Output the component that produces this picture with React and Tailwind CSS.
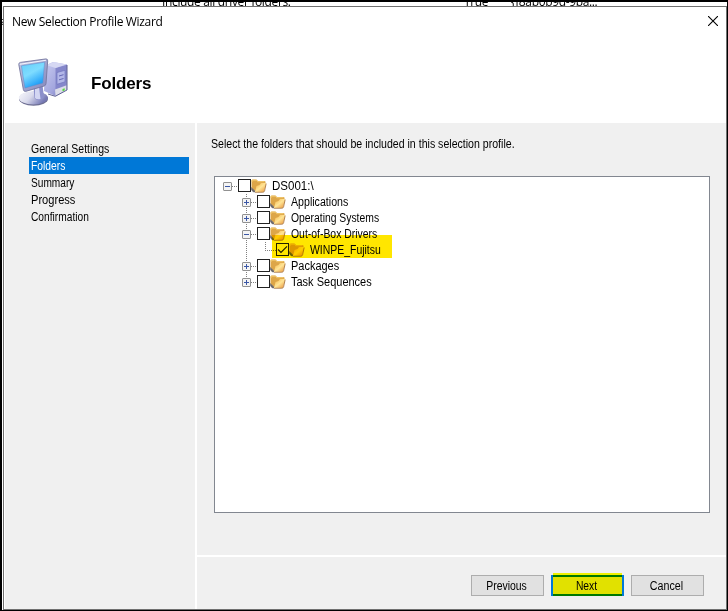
import React from "react";

const steps = [
  { label: "General Settings", width: "scale-x-[0.876]" },
  { label: "Folders", width: "scale-x-[0.86]", active: true },
  { label: "Summary", width: "scale-x-[0.845]" },
  { label: "Progress", width: "scale-x-[0.925]" },
  { label: "Confirmation", width: "scale-x-[0.85]" },
];

const folders = [
  { label: "Applications", toggle: "plus", width: "scale-x-[0.885]" },
  { label: "Operating Systems", toggle: "plus", width: "scale-x-[0.863]" },
  { label: "Out-of-Box Drivers", toggle: "minus", width: "scale-x-[0.868]" },
  { label: "WINPE_Fujitsu", nested: true, checked: true, width: "scale-x-[0.87]" },
  { label: "Packages", toggle: "plus", width: "scale-x-[0.914]" },
  { label: "Task Sequences", toggle: "plus", width: "scale-x-[0.917]" },
];

const ComputerIcon = () => (
  <svg width="52" height="50" viewBox="0 0 52 50">
    <defs>
      <linearGradient id="screen" x1="0" y1="0" x2="0.5" y2="1">
        <stop offset="0" stopColor="#63cdf9" />
        <stop offset="0.5" stopColor="#7edcff" />
        <stop offset="1" stopColor="#1b9cf8" />
      </linearGradient>
      <linearGradient id="frame" x1="0" y1="0" x2="1" y2="1">
        <stop offset="0" stopColor="#c3c5e2" />
        <stop offset="1" stopColor="#8286bc" />
      </linearGradient>
      <linearGradient id="tower" x1="0" y1="0" x2="1" y2="1">
        <stop offset="0" stopColor="#c9ccf0" />
        <stop offset="0.6" stopColor="#a3a6de" />
        <stop offset="1" stopColor="#6a6cb2" />
      </linearGradient>
      <linearGradient id="stand" x1="0" y1="0" x2="1" y2="0.4">
        <stop offset="0" stopColor="#fafafd" />
        <stop offset="0.5" stopColor="#d9daec" />
        <stop offset="1" stopColor="#7578b4" />
      </linearGradient>
    </defs>
    {/* tower */}
    <path d="M27 7.500 35 4l14 2.500-.5 25L37.500 38 26 33Z" fill="url(#tower)" />
    <path d="m37.500 10 11.500-3.200-.5 24.500L37.500 38Z" fill="#8587cb" />
    <path d="m28 7 8-3 12.500 2.600L37.500 10Z" fill="#d6d8f3" />
    <path d="m39 14.500 8-2.200v11.500l-8 2.500Z" fill="#b3b7e8" stroke="#7175bd" strokeWidth="0.7" />
    <path d="m41 18 4.500-1.300M41 21.800l4.500-1.300" stroke="#6568b4" strokeWidth="1" />
    <path d="m37 31.500 11.700-4.200-.2 4.500L37.500 38Z" fill="#dcdde9" />
    <path d="M30 36 37.300 38.300 49 32V7" fill="none" stroke="#5f6193" strokeWidth="1" />
    <path d="m44.500 31 2.200-.8v2.300l-2.200.8Z" fill="#55da3d" />
    {/* round foot and neck */}
    <ellipse cx="15.500" cy="40.800" rx="14.500" ry="7" fill="#6d6e92" />
    <ellipse cx="15.300" cy="39.800" rx="14.500" ry="6.600" fill="url(#stand)" />
    <path d="m15.500 29 9-2 1.500 12c-2 4-8 4-9.500 1Z" fill="#8b8fcb" />
    <path d="m17 30 4-1 1.500 12q-4 1-5.500-1Z" fill="#d3d6f2" />
    {/* monitor */}
    <path
      d="M.8 6.500q-.2-1.800 1.600-2.100L28 .9q1.800 0 1.700 2L28 25.500q-.2 2-1.800 2.500L7.600 33.400q-1.800.3-2.200-1.700Z"
      fill="url(#frame)"
      stroke="#75779f"
      strokeWidth="0.9"
    />
    <path d="M1.800 6.200 28 2.200" stroke="#f3f4fc" strokeWidth="1.100" />
    <path d="m3.400 7.800 23.200-3.600-1.800 20.800L7 30Z" fill="url(#screen)" stroke="#5c8ccc" strokeWidth="0.5" />
  </svg>
);

const FolderIcon = () => (
  <svg className="-ml-px shrink-0" width="17" height="16" viewBox="0 0 17 16">
    <defs>
      <linearGradient id="flap" x1="0" y1="0" x2="1" y2="1">
        <stop offset="0" stopColor="#f5b042" />
        <stop offset="0.5" stopColor="#ffe596" />
        <stop offset="1" stopColor="#e99238" />
      </linearGradient>
    </defs>
    <path d="M1.500 10V2.500l1-1h4L8 3h6.500q1 0 1 1v5L12 13H5Z" fill="#dda648" />
    <path d="M2 4V2.200h4.300L7.700 3.700h6.800" fill="none" stroke="#f2cb70" strokeWidth="1" />
    <path d="M1.200 9 5 12.800v1.500H3.500q-2-1-2.300-3Z" fill="#6e6a6c" />
    <path d="m5 14 1.500-6 3-1L11 5h5l-1.600 7.800q-.3 1.200-1.600 1.200Z" fill="url(#flap)" />
    <path d="M5 14.300h7.800q1.400 0 1.800-1.500L16.200 5.500" fill="none" stroke="#a3703c" strokeWidth="0.8" />
  </svg>
);

const Toggle = ({ type }) => (
  <svg className="shrink-0" width="9" height="9" viewBox="0 0 9 9">
    <rect x="0.500" y="0.500" width="8" height="8" rx="0.500" fill="#f4f4f4" stroke="#919191" />
    <path d="M2 4.500h5" stroke="#3b57a6" />
    {type === "plus" && <path d="M4.500 2v5" stroke="#3b57a6" />}
  </svg>
);

const CheckBox = ({ checked }) => (
  <span className="mb-px flex size-[13px] shrink-0 border border-[#222] bg-white">
    {checked && (
      <svg width="11" height="11" viewBox="0 0 11 11">
        <path d="m1 5.500 3 3 6-6.200" fill="none" stroke="#222" strokeWidth="1.200" />
      </svg>
    )}
  </span>
);

const Dots = () => (
  <span className="h-px w-[6px] shrink-0 bg-[repeating-linear-gradient(90deg,#808080_0_1px,transparent_1px_2px)]" />
);

const FolderRow = ({ folder }) => (
  <div className={`flex h-4 items-center ${folder.nested ? "pl-[50px]" : "pl-[27px]"}`}>
    {folder.nested ? (
      <span className="mb-auto h-[9px] w-[11px] shrink-0 border-b border-l border-dotted border-[#808080]" />
    ) : (
      <>
        <Toggle type={folder.toggle} />
        <Dots />
      </>
    )}
    <CheckBox checked={folder.checked} />
    <FolderIcon />
    <span className={`ml-[5px] origin-left leading-4 whitespace-nowrap ${folder.width}`}>{folder.label}</span>
  </div>
);

const WizardButton = ({ children, primary, width }) => (
  <button
    className={`block h-[21px] w-[73px] bg-[#e1e1e1] pr-[2px] ${
      primary ? "border-2 border-[#0078d7] pt-px leading-[16px]" : "border border-[#adadad] pt-[2px] leading-[17px]"
    }`}
  >
    <span className={`block ${width}`}>{children}</span>
  </button>
);

const App = () => {
  return (
    <div className="relative flex h-[611px] w-[728px] flex-col overflow-hidden border-t-2 border-r border-b border-l-2 border-black bg-white font-['Liberation_Sans',sans-serif] text-[12px] text-black">
      {/* strip of the list behind the dialog */}
      <div className="flex h-1 shrink-0 font-['Open_Sans',sans-serif] leading-3">
        <span className="-mt-[6px] ml-[160px] w-[302px] tracking-[-0.35px] whitespace-nowrap">
          Include all driver folders.
        </span>
        <span className="-mt-[6px] w-[47px] tracking-[-0.4px]">True</span>
        <span className="-mt-[6px] tracking-[-0.35px] whitespace-nowrap">{"{f8ab0b9d-9ba..."}</span>
      </div>
      <span className="absolute top-[13px] -left-[3px] font-['Open_Sans',sans-serif] text-[11px] leading-3">s</span>

      <div className="relative ml-px flex min-h-0 flex-1 flex-col border border-[#707070] bg-white pl-px">
        <header className="h-[116px] shrink-0">
          <div className="flex h-[30px] justify-between pl-[7px] font-['Open_Sans',sans-serif]">
            <span className="leading-[30px] tracking-[-0.34px]">New Selection Profile Wizard</span>
            <svg className="mt-[9px] mr-[8px]" width="10" height="10" viewBox="0 0 10 10">
              <path d="m0 0 10 10M10 0 0 10" stroke="#000" strokeWidth="1.100" />
            </svg>
          </div>
          <div className="flex pt-[21px] pl-[13px]">
            <ComputerIcon />
            <h1 className="mt-[14px] ml-[21px] text-[17px] leading-[24px] font-bold tracking-[-0.15px]">Folders</h1>
          </div>
        </header>

        <div className="flex min-h-0 flex-1">
          <aside className="w-[190px] shrink-0 bg-[#f0f0f0] pt-[17px] pl-6">
            {steps.map((step) => (
              <div
                key={step.label}
                className={`h-[17px] w-[160px] pl-[2px] leading-[18px] ${step.active ? "bg-[#0078d7] text-white" : ""}`}
              >
                <span className={`block origin-left ${step.width}`}>{step.label}</span>
              </div>
            ))}
          </aside>

          <div className="ml-[2px] flex min-w-0 flex-1 flex-col">
            <main className="h-[432px] shrink-0 bg-[#f0f0f0] pt-[13px]">
              <p className="ml-[14px] origin-left scale-x-[0.882] leading-4">
                Select the folders that should be included in this selection profile.
              </p>
              <div className="relative mt-6 ml-[17px] h-[337px] w-[496px] border border-[#828790] bg-white pt-px">
                <div className="flex h-4 items-center pl-2">
                  <Toggle type="minus" />
                  <Dots />
                  <CheckBox />
                  <FolderIcon />
                  <span className="ml-[5px] origin-left scale-x-[0.96] leading-4">DS001:\</span>
                </div>
                <div className="relative">
                  <div className="absolute top-0 left-[31px] h-[84px] w-px bg-[repeating-linear-gradient(#808080_0_1px,transparent_1px_2px)]" />
                  <div className="relative">
                    {folders.map((folder) => (
                      <FolderRow key={folder.label} folder={folder} />
                    ))}
                  </div>
                </div>
                <div className="absolute top-[58px] left-[57px] h-[23px] w-[120px] bg-[#ffe600] mix-blend-multiply" />
              </div>
            </main>
            <footer className="mt-[2px] flex flex-1 gap-[7px] bg-[#f0f0f0] pt-[18px] pl-[274px]">
              <WizardButton width="scale-x-[0.87]">Previous</WizardButton>
              <div className="relative h-[21px]">
                <WizardButton primary width="scale-x-[0.86]">
                  Next
                </WizardButton>
                <div className="absolute -top-[2px] left-[2px] h-[23px] w-[69px] bg-[#ffff00] mix-blend-multiply" />
              </div>
              <WizardButton width="scale-x-[0.89]">Cancel</WizardButton>
            </footer>
          </div>
        </div>
      </div>
    </div>
  );
};

export default App;
